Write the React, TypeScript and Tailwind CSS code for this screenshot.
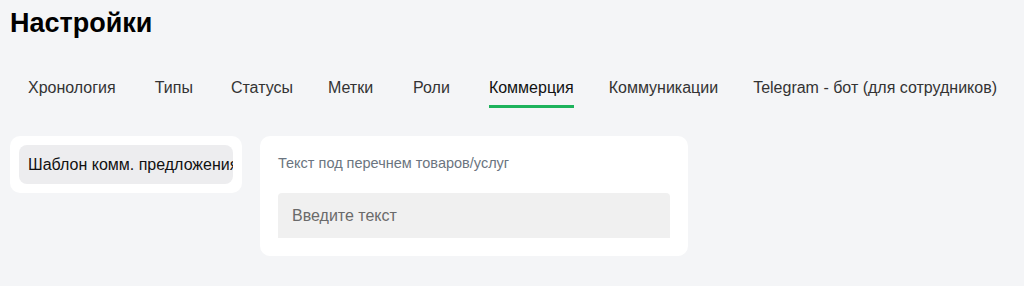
const tabs = [
  { label: 'Хронология', ml: '' },
  { label: 'Типы', ml: 'ml-[39px]' },
  { label: 'Статусы', ml: 'ml-[38px]' },
  { label: 'Метки', ml: 'ml-[35px]' },
  { label: 'Роли', ml: 'ml-[40px]' },
  { label: 'Коммерция', ml: 'ml-[39px]' },
  { label: 'Коммуникации', ml: 'ml-[35px]' },
  { label: 'Telegram - бот (для сотрудников)', ml: 'ml-[35px]' },
];

export default function App() {
  const active = 'Коммерция';

  return (
    <div className="min-h-screen bg-[#f4f5f7] px-[10px] pt-[8px] font-['Liberation_Sans',Arial,sans-serif]">
      {/* Header */}
      <h1 className="text-[27px] font-bold leading-[31px] text-black">Настройки</h1>

      {/* Tabs */}
      <div className="mt-[37px] flex pl-[18px]">
        {tabs.map((tab) => (
          <button
            key={tab.label}
            className={`${tab.ml} border-b-[3px] pb-[5px] text-[16px] leading-6 whitespace-nowrap ${
              tab.label === active ? 'border-[#1db35c] text-[#111]' : 'border-transparent text-[#333]'
            }`}
          >
            {tab.label}
          </button>
        ))}
      </div>

      {/* Content */}
      <div className="mt-[28px] flex items-start gap-[18px]">
        <div className="w-[232px] rounded-[10px] bg-white p-[9px]">
          <div className="flex h-[39px] items-center overflow-hidden rounded-lg bg-[#ededef] px-[9px]">
            <span className="text-[16px] whitespace-nowrap text-[#111]">Шаблон комм. предложения</span>
          </div>
        </div>

        <div className="w-[428px] rounded-[10px] bg-white px-[18px] pt-[19px] pb-[18px]">
          <label className="block text-[14.5px] leading-[17px] text-[#6b7580]">
            Текст под перечнем товаров/услуг
          </label>
          <input
            type="text"
            placeholder="Введите текст"
            className="mt-[21px] block h-[45px] w-full rounded-t-[4px] bg-[#f0f0f0] px-[14px] text-[16px] outline-none placeholder:text-[#6a6a6a]"
          />
        </div>
      </div>
    </div>
  );
}
